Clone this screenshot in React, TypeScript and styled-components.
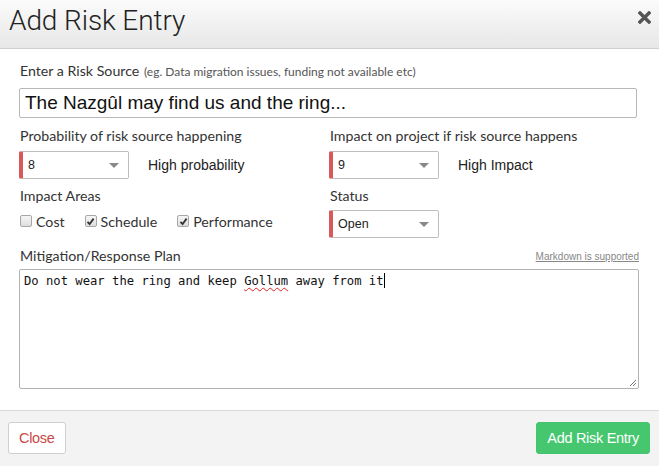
import React from "react";
import styled, { createGlobalStyle } from "styled-components";

const Global = createGlobalStyle`
  html, body { margin: 0; padding: 0; background: #fff; }
  body { font-family: Lato, "Liberation Sans", Arial, sans-serif; color: #333; }
  * { box-sizing: border-box; }
`;

const Dialog = styled.div`
  width: 659px;
  height: 466px;
  display: flex;
  flex-direction: column;
  background: #fff;
  overflow: hidden;
`;

const Header = styled.div`
  height: 49px;
  flex: none;
  display: flex;
  align-items: center;
  justify-content: space-between;
  padding: 0 7px 0 9px;
  background: linear-gradient(#fbfbfb, #e7e7e7);
  border-bottom: 1px solid #cfcfcf;
`;

const Title = styled.h1`
  margin: 0 0 7px;
  font-family: Roboto, "Liberation Sans", sans-serif;
  font-weight: 300;
  font-size: 28px;
  letter-spacing: -0.1px;
  color: #222;
`;

const CloseX = styled.button`
  border: none;
  background: none;
  padding: 0;
  width: 16px;
  height: 16px;
  margin-bottom: 14px;
  display: flex;
  align-items: center;
  justify-content: center;
  cursor: pointer;
`;

const Body = styled.div`
  flex: 1;
  padding: 13px 20px 0 19px;
  display: flex;
  flex-direction: column;
`;

const Label = styled.div`
  font-size: 14.2px;
  color: #333;
  line-height: 18px;
  padding-left: 1px;
`;

const Hint = styled.span`
  font-size: 12px;
  color: #555;
  margin-left: 1px;
`;

const TextInput = styled.input`
  margin-top: 7px;
  width: 618px;
  height: 30px;
  border: 1px solid #b9b9b9;
  border-radius: 2px;
  padding: 0 5px;
  font-family: "Liberation Sans", Arial, sans-serif;
  font-size: 19px;
  color: #111;
  outline: none;
`;

const Columns = styled.div`
  display: grid;
  grid-template-columns: 310px 1fr;
  margin-top: 9px;
`;

const Col = styled.div`
  display: flex;
  flex-direction: column;
`;

const SelectRow = styled.div<{ $mt?: number }>`
  display: flex;
  align-items: center;
  margin-top: ${(p) => p.$mt ?? 6}px;
`;

const SelectBox = styled.div`
  width: 110px;
  height: 28px;
  border: 1px solid #bdbdbd;
  border-left: 4px solid #d65a5a;
  border-radius: 2px;
  display: flex;
  align-items: center;
  justify-content: space-between;
  padding: 0 9px 0 5px;
  font-family: "Liberation Sans", Arial, sans-serif;
  font-size: 12.5px;
  color: #222;
  background: #fff;
`;

const Arrow = styled.span`
  width: 0;
  height: 0;
  border-left: 5px solid transparent;
  border-right: 5px solid transparent;
  border-top: 5px solid #888;
`;

const SelectNote = styled.span`
  margin-left: 19px;
  font-family: "Liberation Sans", Arial, sans-serif;
  font-size: 14px;
  color: #222;
`;

const SubLabel = styled(Label)`
  margin-top: 8px;
`;

const Checks = styled.div`
  display: flex;
  align-items: center;
  gap: 20px;
  margin-top: 7px;
  height: 18px;
  padding-left: 1px;
`;

const CheckItem = styled.label`
  display: flex;
  align-items: center;
  gap: 4px;
  font-size: 14.2px;
  color: #333;
`;

const Box = styled.span`
  width: 12px;
  height: 12px;
  border: 1px solid #a7a7a7;
  border-radius: 2px;
  background: linear-gradient(#f6f6f6, #dedede);
  display: flex;
  align-items: center;
  justify-content: center;
`;

const PlanHead = styled.div`
  display: flex;
  justify-content: space-between;
  align-items: flex-end;
  margin-top: 9px;
`;

const MdLink = styled.a`
  font-family: "Liberation Sans", Arial, sans-serif;
  font-size: 10px;
  color: #888;
  text-decoration: underline;
  margin-bottom: 3px;
`;

const Area = styled.div`
  position: relative;
  margin-top: 4px;
  width: 620px;
  height: 120px;
  border: 1px solid #b3b3b3;
  border-radius: 2px;
  padding: 3px 4px;
  font-family: "DejaVu Sans Mono", "Liberation Mono", monospace;
  font-size: 12.2px;
  color: #111;
`;

const Squiggle = styled.span`
  text-decoration: underline wavy #e02020;
  text-decoration-thickness: 1px;
  text-underline-offset: 2px;
`;

const Caret = styled.span`
  display: inline-block;
  width: 1px;
  height: 15px;
  background: #000;
  vertical-align: -3px;
`;

const Grip = styled.svg`
  position: absolute;
  right: 1px;
  bottom: 1px;
`;

const Footer = styled.div`
  height: 56px;
  flex: none;
  border-top: 1px solid #d8d8d8;
  background: #f3f3f3;
  display: flex;
  align-items: center;
  justify-content: space-between;
  padding: 0 9px 2px 8px;
`;

const Btn = styled.button<{ $primary?: boolean }>`
  height: 32px;
  border-radius: 3px;
  font-family: "Liberation Sans", Arial, sans-serif;
  font-size: 14.5px;
  letter-spacing: -0.3px;
  padding: 0 10px;
  border: 1px solid ${(p) => (p.$primary ? "#44c46d" : "#cfcfcf")};
  background: ${(p) => (p.$primary ? "#46c76f" : "#fff")};
  color: ${(p) => (p.$primary ? "#fff" : "#c94a46")};
`;

const Check = ({ on, label }: { on?: boolean; label: string }) => (
  <CheckItem>
    <Box>
      {on && (
        <svg width="9" height="9" viewBox="0 0 9 9">
          <path d="M1.5 4.8 L3.6 7 L7.6 1.6" fill="none" stroke="#333" strokeWidth="1.8" />
        </svg>
      )}
    </Box>
    {label}
  </CheckItem>
);

const Select = ({ value }: { value: string }) => (
  <SelectBox>
    {value}
    <Arrow />
  </SelectBox>
);

export default function App() {
  return (
    <>
      <Global />
      <Dialog>
        <Header>
          <Title>Add Risk Entry</Title>
          <CloseX aria-label="close">
            <svg width="13" height="13" viewBox="0 0 13 13">
              <path d="M2 2 L11 11 M11 2 L2 11" stroke="#555" strokeWidth="3.4" strokeLinecap="square" />
            </svg>
          </CloseX>
        </Header>
        <Body>
          <Label>
            Enter a Risk Source <Hint>(eg. Data migration issues, funding not available etc)</Hint>
          </Label>
          <TextInput defaultValue="The Nazgûl may find us and the ring..." />
          <Columns>
            <Col>
              <Label>Probability of risk source happening</Label>
              <SelectRow>
                <Select value="8" />
                <SelectNote>High probability</SelectNote>
              </SelectRow>
              <SubLabel>Impact Areas</SubLabel>
              <Checks>
                <Check label="Cost" />
                <Check on label="Schedule" />
                <Check on label="Performance" />
              </Checks>
            </Col>
            <Col>
              <Label>Impact on project if risk source happens</Label>
              <SelectRow>
                <Select value="9" />
                <SelectNote>High Impact</SelectNote>
              </SelectRow>
              <SubLabel>Status</SubLabel>
              <SelectRow $mt={5}>
                <Select value="Open" />
              </SelectRow>
            </Col>
          </Columns>
          <PlanHead>
            <Label>Mitigation/Response Plan</Label>
            <MdLink>Markdown is supported</MdLink>
          </PlanHead>
          <Area>
            Do not wear the ring and keep <Squiggle>Gollum</Squiggle> away from it
            <Caret />
            <Grip width="9" height="9" viewBox="0 0 9 9">
              <path d="M8 2 L2 8 M8 5 L5 8" stroke="#777" strokeWidth="1" />
            </Grip>
          </Area>
        </Body>
        <Footer>
          <Btn>Close</Btn>
          <Btn $primary>Add Risk Entry</Btn>
        </Footer>
      </Dialog>
    </>
  );
}
